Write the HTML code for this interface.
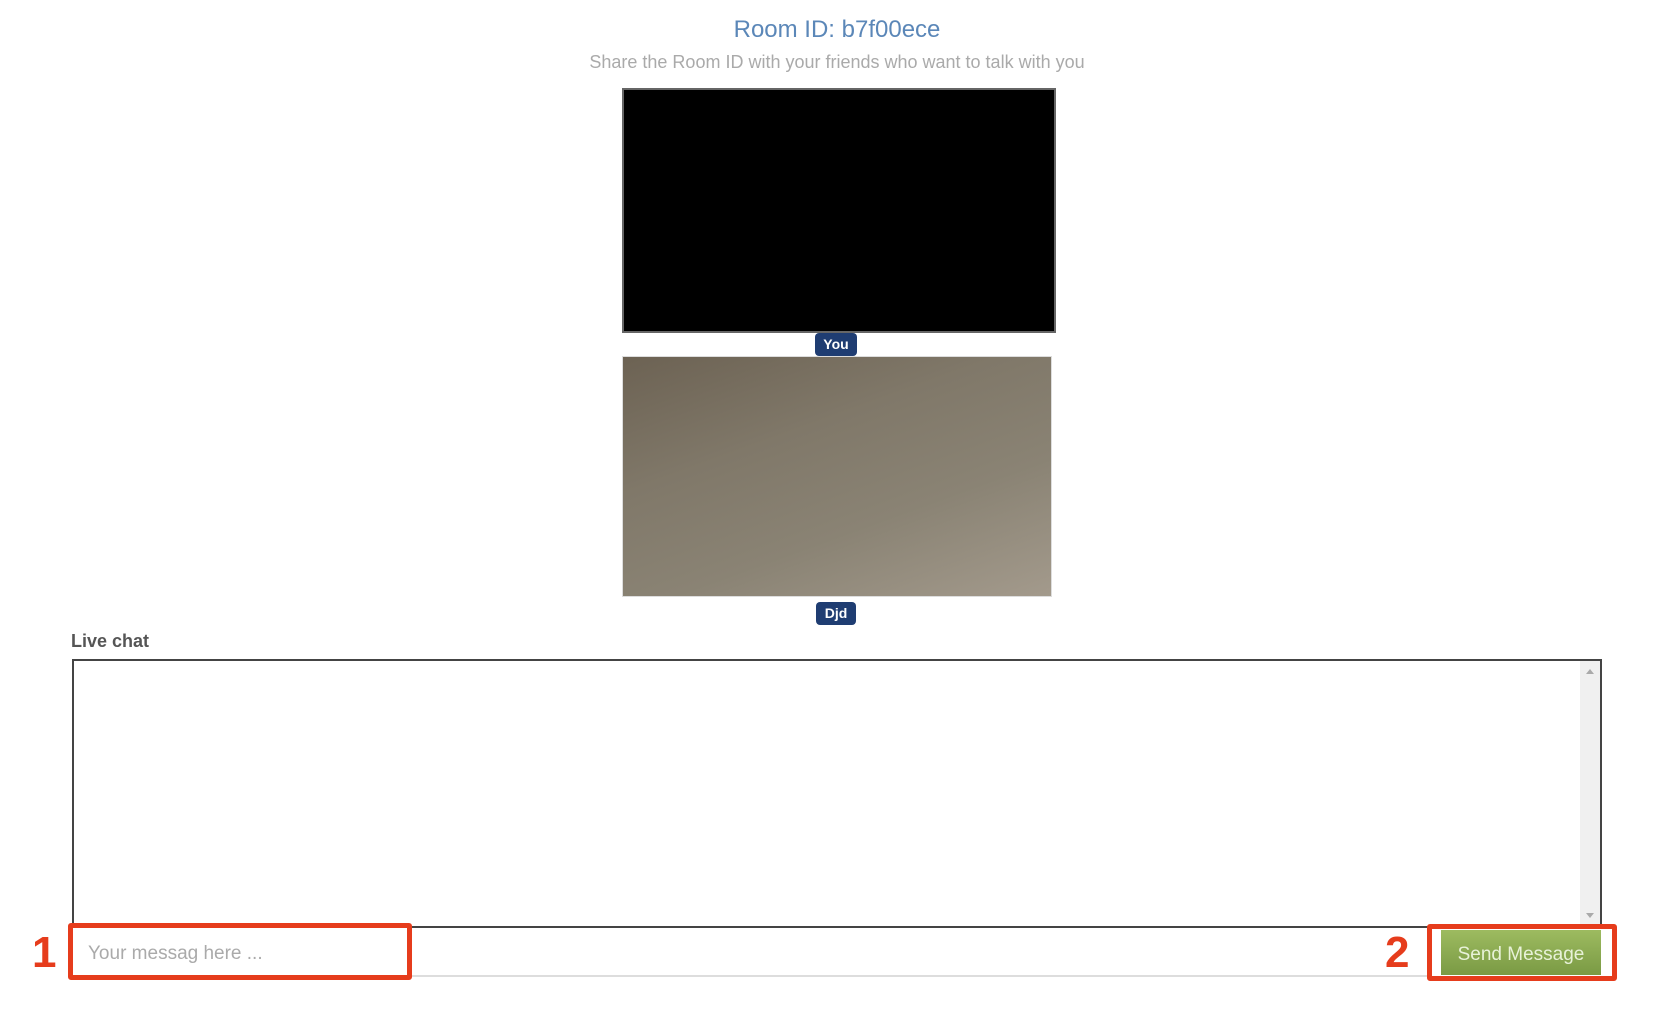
<!DOCTYPE html>
<html><head><meta charset="utf-8"><style>
*{margin:0;padding:0;box-sizing:border-box}
body{width:1660px;height:1017px;background:#fff;position:relative;font-family:"Liberation Sans",sans-serif;overflow:hidden}
.a{position:absolute}
</style></head><body>
<div class="a" style="left:0;width:1674px;top:14px;text-align:center;font-size:24px;color:#5b87b8;line-height:32px">Room ID: b7f00ece</div>
<div class="a" style="left:0;width:1674px;top:52px;text-align:center;font-size:18px;color:#aaa;line-height:20px">Share the Room ID with your friends who want to talk with you</div>
<div class="a" style="left:622px;top:88px;width:434px;height:245px;background:#000;border:2px solid #666"></div>
<div class="a" style="left:815px;top:333px;width:42px;height:23px;background:#1f3d72;border-radius:4px;color:#fff;font-weight:bold;font-size:14px;text-align:center;line-height:23px">You</div>
<div class="a" style="left:622px;top:356px;width:430px;height:241px;background:linear-gradient(160deg,#6c6253 0%,#807869 35%,#8a8374 65%,#a39a8c 100%);border:1px solid #ddd"></div>
<div class="a" style="left:816px;top:602px;width:40px;height:23px;background:#1f3d72;border-radius:4px;color:#fff;font-weight:bold;font-size:14px;text-align:center;line-height:23px">Djd</div>
<div class="a" style="left:71px;top:631px;font-size:18px;font-weight:bold;color:#555">Live chat</div>
<div class="a" style="left:72px;top:659px;width:1530px;height:269px;border:2px solid #444;border-bottom-width:2px;background:#fff">
<div class="a" style="right:0;top:0;width:20px;height:100%;background:#f0f0f0"></div>
<div class="a" style="right:6px;top:8px;width:0;height:0;border-left:4px solid transparent;border-right:4px solid transparent;border-bottom:5px solid #aaa"></div>
<div class="a" style="right:6px;bottom:8px;width:0;height:0;border-left:4px solid transparent;border-right:4px solid transparent;border-top:5px solid #aaa"></div>
</div>
<div class="a" style="left:72px;top:975px;width:1370px;height:2px;background:#ddd"></div>
<div class="a" style="left:68px;top:923px;width:344px;height:57px;border:5px solid #e63c1c;border-radius:3px;background:#fff"></div>
<div class="a" style="left:88px;top:943px;font-size:19px;color:#aaa">Your messag here ...</div>
<div class="a" style="left:32px;top:928px;font-size:44px;font-weight:bold;color:#e63c1c">1</div>
<div class="a" style="left:1385px;top:928px;font-size:44px;font-weight:bold;color:#e63c1c">2</div>
<div class="a" style="left:1427px;top:924px;width:190px;height:57px;border:5px solid #e63c1c;border-radius:3px;background:#fff"></div>
<div class="a" style="left:1441px;top:930px;width:160px;height:45px;background:linear-gradient(#9dbb60,#7a9a44);color:#e8f2d8;font-size:19px;text-align:center;line-height:49px">Send Message</div>
</body></html>
